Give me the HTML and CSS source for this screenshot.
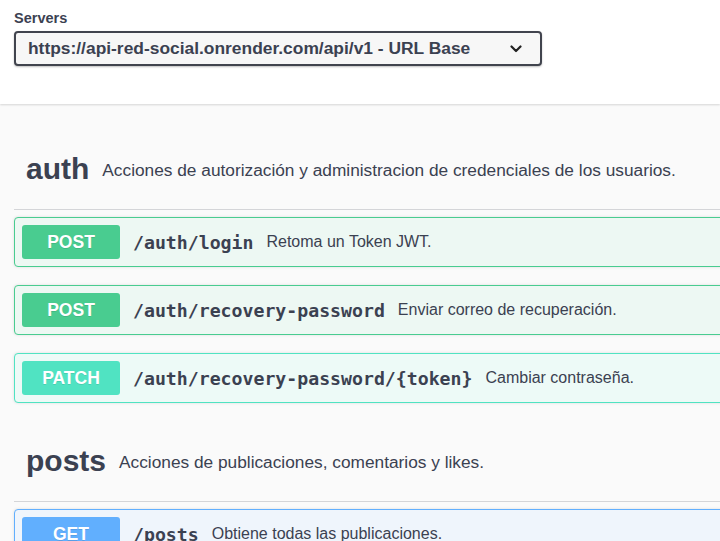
FILE: index.html
```html
<!DOCTYPE html>
<html lang="es">
<head>
<meta charset="utf-8">
<title>API Red Social</title>
<link rel="stylesheet" href="styles.css">
</head>
<body>
<section class="scheme">
  <div class="servers">
    <label class="servers-title">Servers</label>
    <div class="select">
      <span class="select-text">https://api-red-social.onrender.com/api/v1 - URL Base</span>
      <svg class="chevron" width="12" height="8" viewBox="0 0 12 8"><path d="M1.5 1.5 L6 6 L10.5 1.5" fill="none" stroke="#222" stroke-width="2.2" stroke-linecap="round" stroke-linejoin="round"/></svg>
    </div>
  </div>
</section>
<main class="wrapper">
  <section class="tag-section">
    <h3 class="tag"><span class="tag-name">auth</span><small class="tag-desc">Acciones de autorización y administracion de credenciales de los usuarios.</small></h3>
    <div class="opblock post">
      <span class="method">POST</span>
      <span class="path">/auth/login</span>
      <span class="desc">Retoma un Token JWT.</span>
    </div>
    <div class="opblock post">
      <span class="method">POST</span>
      <span class="path">/auth/recovery-password</span>
      <span class="desc">Enviar correo de recuperación.</span>
    </div>
    <div class="opblock patch">
      <span class="method">PATCH</span>
      <span class="path">/auth/recovery-password/{token}</span>
      <span class="desc">Cambiar contraseña.</span>
    </div>
  </section>
  <section class="tag-section">
    <h3 class="tag"><span class="tag-name">posts</span><small class="tag-desc">Acciones de publicaciones, comentarios y likes.</small></h3>
    <div class="opblock get">
      <span class="method">GET</span>
      <span class="path">/posts</span>
      <span class="desc">Obtiene todas las publicaciones.</span>
    </div>
  </section>
</main>
</body>
</html>
```
FILE: styles.css
```css
html, body {
  margin: 0;
  padding: 0;
  overflow: hidden;
}
body {
  background: #fafafa;
  font-family: "Liberation Sans", Arial, sans-serif;
  color: #3b4151;
  height: 541px;
}
.scheme {
  background: #fff;
  height: 104px;
  box-shadow: 0 1px 2px 0 rgba(0, 0, 0, 0.15);
  box-sizing: border-box;
  padding: 10px 0 0 14px;
  position: relative;
}
.servers {
  display: flex;
  flex-direction: column;
}
.servers-title {
  font-size: 14.5px;
  font-weight: bold;
  line-height: 17px;
  margin-bottom: 4px;
}
.select {
  width: 528px;
  height: 35px;
  box-sizing: border-box;
  border: 2px solid #41444e;
  border-radius: 4px;
  background: #f7f7f7;
  box-shadow: 0 1px 2px 0 rgba(0, 0, 0, 0.25);
  display: flex;
  align-items: center;
  padding: 0 18px 0 12px;
  justify-content: space-between;
}
.select-text {
  font-size: 17.4px;
  font-weight: bold;
  color: #3b4151;
}
.wrapper {
  width: 760px;
  padding: 0 14px;
  margin-top: 25px;
}
.tag {
  margin: 0 0 7px;
  height: 80px;
  border-bottom: 1px solid rgba(59, 65, 81, 0.2);
  display: flex;
  align-items: center;
  padding: 0 0 0 12px;
  font-weight: normal;
}
.tag-name {
  font-size: 30px;
  font-weight: bold;
  color: #3b4151;
}
.tag-desc {
  font-size: 17.3px;
  padding-left: 13px;
  color: #3b4151;
  padding-top: 2px;
}
.opblock {
  height: 50px;
  box-sizing: border-box;
  border: 1px solid;
  border-radius: 4px;
  margin-bottom: 18px;
  padding: 0 7px;
  display: flex;
  align-items: center;
  box-shadow: 0 0 3px rgba(0, 0, 0, 0.12);
}
.method {
  width: 98px;
  height: 34px;
  border-radius: 3px;
  color: #fff;
  font-weight: bold;
  font-size: 17.5px;
  display: flex;
  align-items: center;
  justify-content: center;
  text-shadow: 0 1px 0 rgba(0, 0, 0, 0.1);
  flex: none;
}
.path {
  font-family: "DejaVu Sans Mono", "Liberation Mono", monospace;
  font-weight: bold;
  font-size: 18.2px;
  color: #3b4151;
  margin-left: 13px;
}
.desc {
  font-size: 16px;
  margin-left: 13px;
  color: #3b4151;
}
.post {
  background: #edf8f3;
  border-color: #49cc90;
}
.post .method {
  background: #49cc90;
}
.patch {
  background: #edfaf7;
  border-color: #50e3c2;
}
.patch .method {
  background: #50e3c2;
}
.get {
  background: #eff5fc;
  border-color: #61affe;
}
.get .method {
  background: #61affe;
}
```
